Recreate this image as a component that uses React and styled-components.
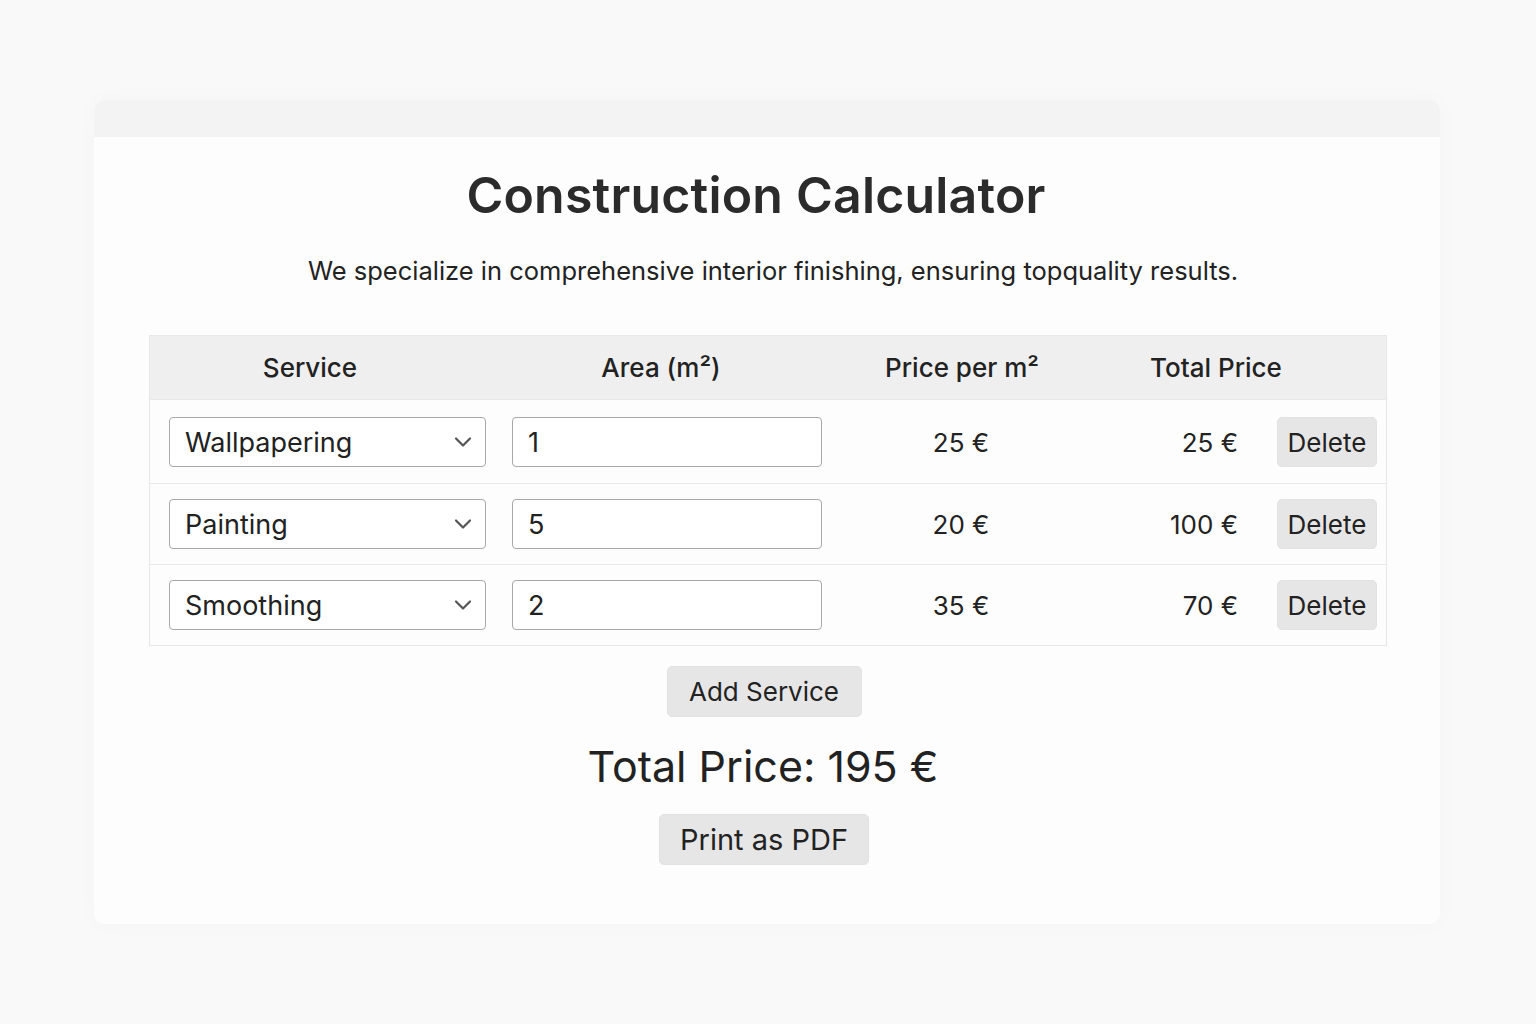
import React, { useState } from "react";
import styled, { createGlobalStyle } from "styled-components";

const GlobalStyle = createGlobalStyle`
  body {
    margin: 0;
    background: #f9f9f9;
    font-family: Inter, "Noto Sans", sans-serif;
    color: #222;
  }
`;

const Page = styled.div`
  padding: 100px 96px 100px 94px;
`;

const Card = styled.div`
  background: #fdfdfd;
  border-radius: 10px;
  box-shadow: 0 0 24px rgba(0, 0, 0, 0.025);
  overflow: hidden;
`;

const TopBar = styled.div`
  height: 37px;
  background: #f3f3f3;
`;

const Body = styled.div`
  padding: 28px 53px 59px 55px;
  display: flex;
  flex-direction: column;
  align-items: center;
`;

const Title = styled.h1`
  margin: 0 24px 0 0;
  font-size: 50px;
  font-weight: 600;
  color: #2b2b2b;
  letter-spacing: 0.2px;
`;

const Subtitle = styled.p`
  margin: 30px 0 0 10px;
  font-size: 25.5px;
  font-weight: 400;
  color: #222;
`;

const Table = styled.div`
  align-self: stretch;
  margin-top: 49px;
  border: 1px solid #e8e8e8;
`;

const HeaderRow = styled.div`
  display: grid;
  grid-template-columns: 320px 382px 220px 288px 1fr;
  height: 63px;
  align-items: center;
  background: #efefef;
`;

const HeaderCell = styled.div`
  text-align: center;
  font-size: 26px;
  font-weight: 500;
  color: #222;
`;

const Row = styled.div`
  display: grid;
  grid-template-columns: 317px 336px 278px 138px 1fr;
  align-items: center;
  padding: 15px 10px 15px 19px;
  border-top: 1px solid #e8e8e8;
  &:nth-child(2) {
    padding-top: 17px;
    padding-bottom: 16px;
  }
`;

const SelectWrap = styled.div`
  position: relative;
  width: 317px;
  height: 50px;
`;

const Select = styled.select`
  appearance: none;
  width: 100%;
  height: 100%;
  box-sizing: border-box;
  border: 1.5px solid #a8a8a8;
  border-radius: 4px;
  background: #fff;
  padding: 0 40px 0 15px;
  font-family: inherit;
  font-size: 27px;
  color: #222;
`;

const Chevron = styled.svg`
  position: absolute;
  right: 14px;
  top: 19px;
  pointer-events: none;
`;

const Input = styled.input`
  margin-left: 26px;
  width: 310px;
  height: 50px;
  box-sizing: border-box;
  border: 1.5px solid #a8a8a8;
  border-radius: 4px;
  background: #fff;
  padding: 0 15px;
  font-family: inherit;
  font-size: 27px;
  color: #222;
`;

const Cell = styled.div`
  font-size: 26px;
  color: #222;
  text-align: ${({ $align }) => $align || "center"};
`;

const Button = styled.button`
  border: 1px solid #e2e2e2;
  background: #e6e6e6;
  border-radius: 5px;
  font-family: inherit;
  font-size: 26px;
  color: #222;
  cursor: pointer;
  height: 51px;
  padding: 0;
  white-space: nowrap;
`;

const DeleteButton = styled(Button)`
  width: 100px;
  height: 50px;
  margin-left: 39px;
`;

const AddButton = styled(Button)`
  margin: 20px 8px 0 0;
  width: 195px;
`;

const Total = styled.div`
  margin: 23px 10px 0 0;
  font-size: 43px;
  color: #222;
`;

const PrintButton = styled(Button)`
  margin: 22px 8px 0 0;
  width: 210px;
  font-size: 29px;
`;

const services = {
  Wallpapering: 25,
  Painting: 20,
  Smoothing: 35,
};

const initial = [
  { service: "Wallpapering", area: 1 },
  { service: "Painting", area: 5 },
  { service: "Smoothing", area: 2 },
];

const App = () => {
  const [rows, setRows] = useState(initial);

  const update = (i, key, value) => {
    setRows(rows.map((r, idx) => (idx === i ? { ...r, [key]: value } : r)));
  };

  const total = rows.reduce((sum, r) => sum + services[r.service] * (Number(r.area) || 0), 0);

  return (
    <>
      <GlobalStyle />
      <Page>
        <Card>
          <TopBar />
          <Body>
            <Title>Construction Calculator</Title>
            <Subtitle>
              We specialize in comprehensive interior finishing, ensuring topquality results.
            </Subtitle>
            <Table>
              <HeaderRow>
                <HeaderCell>Service</HeaderCell>
                <HeaderCell>Area (m²)</HeaderCell>
                <HeaderCell>Price per m²</HeaderCell>
                <HeaderCell>Total Price</HeaderCell>
                <div />
              </HeaderRow>
              {rows.map((r, i) => (
                <Row key={i}>
                  <SelectWrap>
                    <Select value={r.service} onChange={(e) => update(i, "service", e.target.value)}>
                      {Object.keys(services).map((s) => (
                        <option key={s}>{s}</option>
                      ))}
                    </Select>
                    <Chevron width="18" height="12" viewBox="0 0 18 12">
                      <path d="M2 2.5 L9 9.5 L16 2.5" fill="none" stroke="#555" strokeWidth="2.2" strokeLinecap="round" strokeLinejoin="round" />
                    </Chevron>
                  </SelectWrap>
                  <Input value={r.area} onChange={(e) => update(i, "area", e.target.value)} />
                  <Cell>{services[r.service]} €</Cell>
                  <Cell $align="right">{services[r.service] * (Number(r.area) || 0)} €</Cell>
                  <DeleteButton onClick={() => setRows(rows.filter((_, idx) => idx !== i))}>Delete</DeleteButton>
                </Row>
              ))}
            </Table>
            <AddButton onClick={() => setRows([...rows, { service: "Painting", area: 1 }])}>
              Add Service
            </AddButton>
            <Total>Total Price: {total} €</Total>
            <PrintButton onClick={() => window.print()}>Print as PDF</PrintButton>
          </Body>
        </Card>
      </Page>
    </>
  );
};

export default App;
